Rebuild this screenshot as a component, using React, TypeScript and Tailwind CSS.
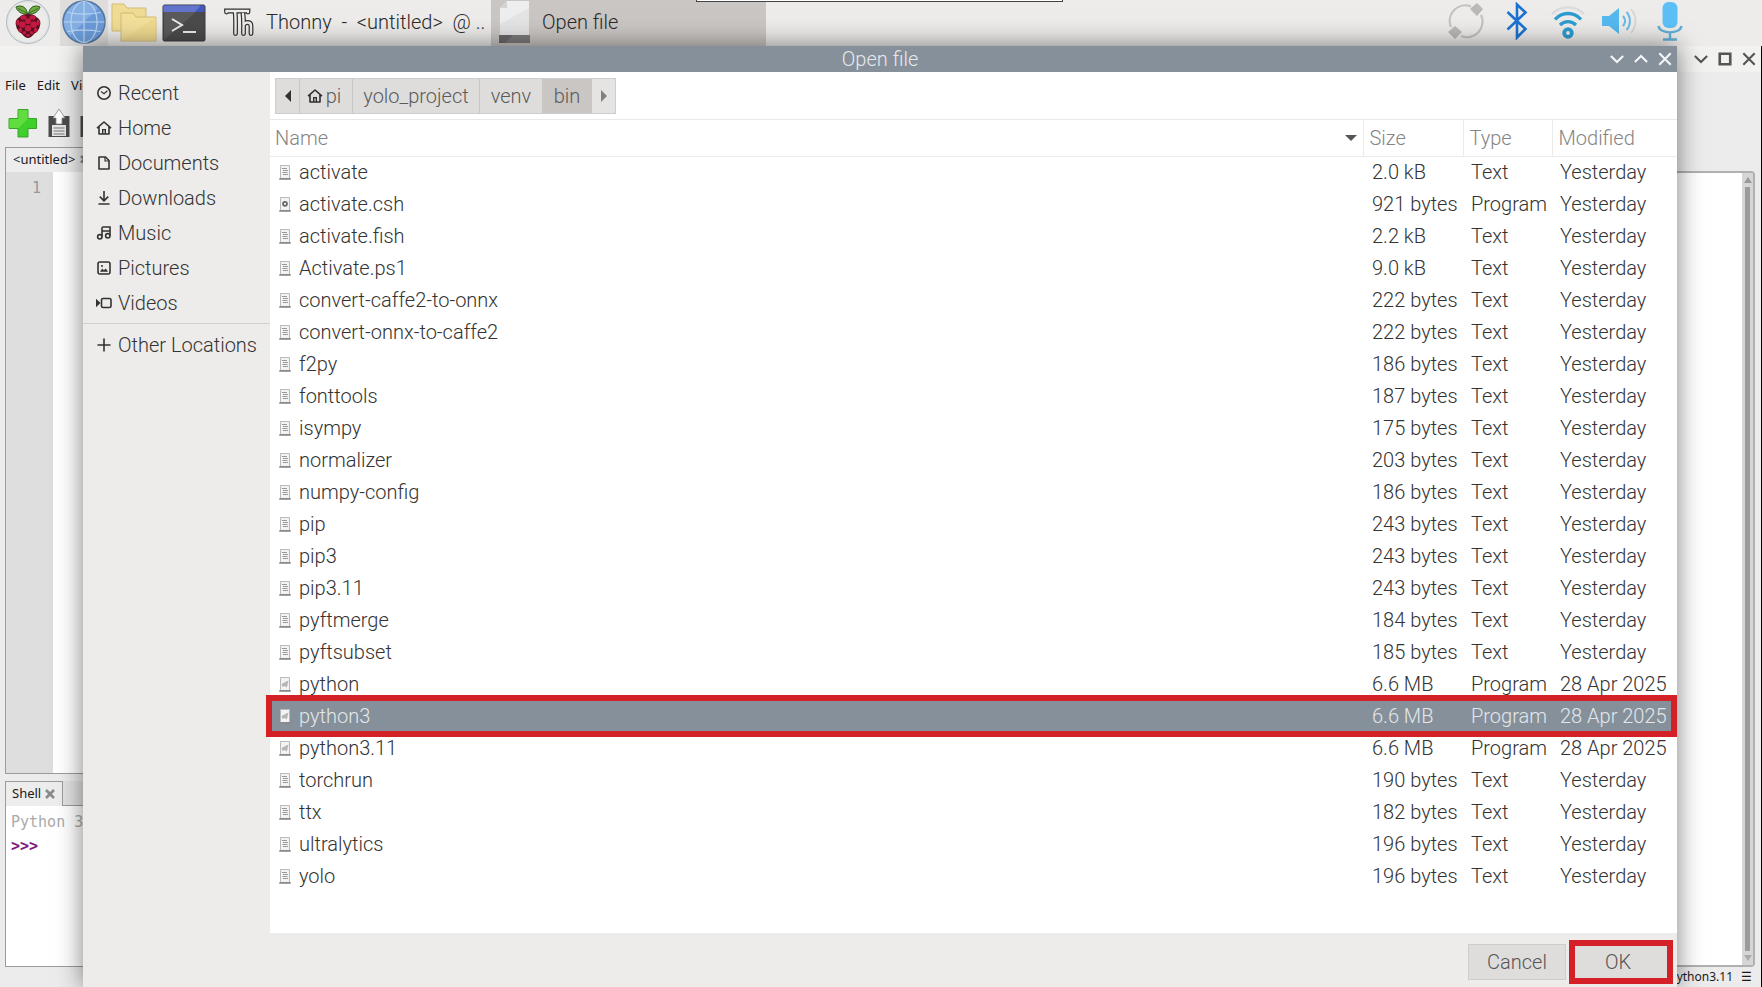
import type { ReactNode } from 'react';

type FileKind = 'Text' | 'Program';

interface FileEntry {
  name: string;
  size: string;
  type: FileKind;
  modified: string;
  icon?: 'text' | 'script' | 'link';
  selected?: boolean;
}

const files: FileEntry[] = [
  { name: 'activate', size: '2.0 kB', type: 'Text', modified: 'Yesterday' },
  { name: 'activate.csh', size: '921 bytes', type: 'Program', modified: 'Yesterday', icon: 'script' },
  { name: 'activate.fish', size: '2.2 kB', type: 'Text', modified: 'Yesterday' },
  { name: 'Activate.ps1', size: '9.0 kB', type: 'Text', modified: 'Yesterday' },
  { name: 'convert-caffe2-to-onnx', size: '222 bytes', type: 'Text', modified: 'Yesterday' },
  { name: 'convert-onnx-to-caffe2', size: '222 bytes', type: 'Text', modified: 'Yesterday' },
  { name: 'f2py', size: '186 bytes', type: 'Text', modified: 'Yesterday' },
  { name: 'fonttools', size: '187 bytes', type: 'Text', modified: 'Yesterday' },
  { name: 'isympy', size: '175 bytes', type: 'Text', modified: 'Yesterday' },
  { name: 'normalizer', size: '203 bytes', type: 'Text', modified: 'Yesterday' },
  { name: 'numpy-config', size: '186 bytes', type: 'Text', modified: 'Yesterday' },
  { name: 'pip', size: '243 bytes', type: 'Text', modified: 'Yesterday' },
  { name: 'pip3', size: '243 bytes', type: 'Text', modified: 'Yesterday' },
  { name: 'pip3.11', size: '243 bytes', type: 'Text', modified: 'Yesterday' },
  { name: 'pyftmerge', size: '184 bytes', type: 'Text', modified: 'Yesterday' },
  { name: 'pyftsubset', size: '185 bytes', type: 'Text', modified: 'Yesterday' },
  { name: 'python', size: '6.6 MB', type: 'Program', modified: '28 Apr 2025', icon: 'link' },
  { name: 'python3', size: '6.6 MB', type: 'Program', modified: '28 Apr 2025', icon: 'link', selected: true },
  { name: 'python3.11', size: '6.6 MB', type: 'Program', modified: '28 Apr 2025', icon: 'link' },
  { name: 'torchrun', size: '190 bytes', type: 'Text', modified: 'Yesterday' },
  { name: 'ttx', size: '182 bytes', type: 'Text', modified: 'Yesterday' },
  { name: 'ultralytics', size: '196 bytes', type: 'Text', modified: 'Yesterday' },
  { name: 'yolo', size: '196 bytes', type: 'Text', modified: 'Yesterday' },
];

/* ---------- icons ---------- */

function Glyph({ children, className = 'size-4' }: { children: ReactNode; className?: string }) {
  return (
    <svg viewBox="0 0 16 16" fill="none" stroke="currentColor" strokeWidth="1.6" className={`${className} shrink-0`} aria-hidden="true">
      {children}
    </svg>
  );
}

const HomeIcon = () => (
  <Glyph>
    <path d="M1 8.2 8 2l7 6.2M3 7v7h10V7" strokeLinejoin="round" />
    <path d="M6.7 14V9.6h2.6V14" strokeWidth="1.4" />
  </Glyph>
);

const places: { label: string; icon: ReactNode }[] = [
  {
    label: 'Recent',
    icon: (
      <Glyph>
        <circle cx="8" cy="8" r="6.2" />
        <path d="m5 6.5 3 2.2 3.4-3" strokeWidth="1.2" />
      </Glyph>
    ),
  },
  { label: 'Home', icon: <HomeIcon /> },
  {
    label: 'Documents',
    icon: (
      <Glyph>
        <path d="M3 2h6.5L13 5.5V14H3z" strokeLinejoin="round" />
        <path d="M9 2v4h4" strokeWidth="1.2" />
      </Glyph>
    ),
  },
  {
    label: 'Downloads',
    icon: (
      <Glyph>
        <path d="M8 1v9.5M3.8 6.6 8 10.8l4.2-4.2M2.5 14h11" />
      </Glyph>
    ),
  },
  {
    label: 'Music',
    icon: (
      <Glyph>
        <path d="M6 11.5V3.2c0-.7.4-1.2 1.2-1.2H14v8.5M6 6h8" />
        <circle cx="3.8" cy="11.8" r="2.2" />
        <circle cx="11.8" cy="10.8" r="2.2" />
      </Glyph>
    ),
  },
  {
    label: 'Pictures',
    icon: (
      <Glyph>
        <rect x="2" y="2" width="12" height="12" rx="2" />
        <path d="M4 11.8 6.2 8.6l1.6 1.6 2-1.8 2.2 3.4z" fill="currentColor" stroke="none" />
        <circle cx="6" cy="6" r="1" fill="currentColor" stroke="none" />
      </Glyph>
    ),
  },
  {
    label: 'Videos',
    icon: (
      <Glyph>
        <rect x="5.5" y="3.5" width="9.5" height="9" rx="1.6" />
        <path d="M0 3.8 4.5 8 0 12.2z" fill="currentColor" stroke="none" />
      </Glyph>
    ),
  },
];

function FileIcon({ kind = 'text' }: { kind?: 'text' | 'script' | 'link' }) {
  return (
    <svg viewBox="0 0 12 15" className="h-[15px] w-3 shrink-0" aria-hidden="true">
      <path d="M1.5.5h9v13h-9z" fill="#f3f3f3" stroke="#b9b9b9" />
      <path d="M.3 13h11.4v1.8H.3z" fill="#8a8a8a" />
      {kind === 'text' && <path d="M3 3.5h5M4 5.5h5M3.5 7.5h5M4 9.5h5" stroke="#909090" strokeWidth=".9" />}
      {kind === 'script' && <circle cx="6" cy="6.8" r="2" fill="none" stroke="#666" strokeWidth="1.7" />}
      {kind === 'link' && <path d="M9.5 3.5 7.8 10.5 5.8 9 3.5 10l-1-3z" fill="#b5b5b5" />}
    </svg>
  );
}

function Raspberry() {
  return (
    <svg viewBox="0 0 46 44" className="h-11 w-[46px]" aria-hidden="true">
      <circle cx="23" cy="22" r="21.5" fill="#e4e4e4" stroke="#aebac2" />
      <circle cx="23" cy="22" r="19.5" fill="#ebebea" />
      <path d="M22.500 14C17 14.500 12 11.500 11 7c5-2.500 10.500-.5 11.500 7zM23.500 14c5.500.5 10.500-2.500 11.500-7-5-2.500-10.500-.5-11.500 7z" fill="#6fae45" stroke="#31551f" />
      <path d="M13 8.500 22 13M33 8.500 24 13" stroke="#31551f" strokeWidth=".8" />
      <path d="M23 14c4 0 7 1 9 3.500 3 1.500 4 5 3 8-.5 4-3 6.500-5.500 8C27.500 36 25 38 23 38s-4.500-2-6.500-4.500c-2.500-1.500-5-4-5.500-8-1-3 0-6.500 3-8C16 15 19 14 23 14z" fill="#54101f" />
      <g fill="#c1193f">
        <ellipse cx="18.500" cy="17.500" rx="3.200" ry="2.300" />
        <ellipse cx="27.500" cy="17.500" rx="3.200" ry="2.300" />
        <circle cx="23" cy="21.200" r="2.900" />
        <circle cx="17.300" cy="24.500" r="3.300" />
        <circle cx="28.700" cy="24.500" r="3.300" />
        <ellipse cx="12.800" cy="22.500" rx="1.600" ry="3" />
        <ellipse cx="33.200" cy="22.500" rx="1.600" ry="3" />
        <circle cx="23" cy="28.200" r="3.200" />
        <ellipse cx="15.300" cy="30" rx="2" ry="2.600" />
        <ellipse cx="30.700" cy="30" rx="2" ry="2.600" />
        <ellipse cx="19.300" cy="32.800" rx="2" ry="1.800" />
        <ellipse cx="26.700" cy="32.800" rx="2" ry="1.800" />
        <ellipse cx="23" cy="35.300" rx="2.200" ry="1.400" />
      </g>
    </svg>
  );
}

function Globe() {
  return (
    <svg viewBox="0 0 44 44" className="size-11" aria-hidden="true">
      <circle cx="22" cy="22" r="21" fill="#6b9bd8" stroke="#54779f" strokeWidth="1.5" />
      <path d="M2 22A20 20 0 0 1 36 8L8 36a20 20 0 0 1-6-14z" fill="#86b0e4" />
      <g fill="none" stroke="#b9d3f2" strokeWidth="1.2">
        <ellipse cx="22" cy="22" rx="13" ry="20.500" />
        <path d="M22 1.500v41M1.500 22h41M5.500 12.500c10 2 23 2 33 0M5.500 31.500c10-2 23-2 33 0" />
      </g>
    </svg>
  );
}

function Folders() {
  return (
    <svg viewBox="0 0 46 40" className="h-10 w-[46px]" aria-hidden="true">
      <g stroke="#d2bd74" strokeWidth="1">
        <path d="M1 2h12l3 4h19v23H1z" fill="#f0dc95" />
        <path d="M10 11h12l3 4h20v24H10z" fill="#f3e09b" />
      </g>
      <path d="M10.500 38.500 44.500 15.500v23z" fill="#efda8e" />
    </svg>
  );
}

function Terminal() {
  return (
    <svg viewBox="0 0 44 38" className="h-[38px] w-11" aria-hidden="true">
      <rect x="1" y="1" width="42" height="36" rx="1.500" fill="#4b4b4b" stroke="#3d3d44" />
      <path d="M2 8h32L2 36z" fill="#5a5a5a" />
      <path d="M1.500 1.500h41V8h-41z" fill="#4459bd" />
      <path d="M1.500 1.500h37L33 8H1.500z" fill="#6274cb" />
      <path d="m10 15 10 6-10 6M21 28h13" fill="none" stroke="#ececec" strokeWidth="2" />
    </svg>
  );
}

function ThonnyLogo() {
  const strokes = 'M2.500 4 2.500 3h21.500v1M11 3c1 8 .5 16 .5 22.500M19 6c.8 6 .5 13 .5 19.500M19.500 17c2-3.500 7.500-3.500 7.500 1v7.500';
  return (
    <svg viewBox="0 0 30 29" className="h-[29px] w-[30px] shrink-0" fill="none" strokeLinecap="round" aria-hidden="true">
      <path d={strokes} stroke="#303030" strokeWidth="4.800" />
      <path d={strokes} stroke="#eeedeb" strokeWidth="2.400" />
    </svg>
  );
}

function BlankPage() {
  return (
    <svg viewBox="0 0 32 44" className="h-11 w-8" aria-hidden="true">
      <path d="M8 1h22v35H1V8z" fill="#eeeeee" />
      <path d="M1 24 30 8v28H1z" fill="#e4e4e5" />
      <path d="M8 1v7H1z" fill="#d5d4d3" />
      <path d="M0 35h31v8H0z" fill="#6a6868" />
      <path d="M14 35h17v8H6z" fill="#7d7b7b" />
    </svg>
  );
}

function TrayIcons() {
  return (
    <div className="flex items-center pr-[67px] pb-1 [&>button]:flex [&>button]:w-[51px] [&>button]:justify-center">
      <button aria-label="Updates">
        <svg viewBox="0 0 36 38" className="h-[38px] w-9" fill="none" aria-hidden="true">
          <path d="M3 25A15.500 15.500 0 0 1 23 4.500M33 13a15.500 15.500 0 0 1-20 21" stroke="#c4c2c0" strokeWidth="2.200" />
          <path d="m29 1 6 6-6 7-7-7zM7 24l7 6-7 7-7-7z" fill="#bbb9b7" />
        </svg>
      </button>
      <button aria-label="Bluetooth">
        <svg viewBox="0 0 22 38" className="h-[38px] w-[22px]" fill="none" stroke="#1a73d2" strokeWidth="2.600" aria-hidden="true">
          <path d="m1.500 10 18 17-8.500 8.500v-33l8.500 8-18 17" />
        </svg>
      </button>
      <button aria-label="Wi-Fi">
        <svg viewBox="0 0 36 38" className="h-[38px] w-9" fill="none" aria-hidden="true">
          <path d="M2 12c9-9 23-9 32 0" stroke="#dcdcdc" strokeWidth="2.500" />
          <path d="M5 17.500c7-8 19-8 26 0M10 23c4.500-4.500 11.500-4.500 16 0" stroke="#2c9cd2" strokeWidth="3.400" />
          <circle cx="18" cy="31" r="3.800" stroke="#2c9cd2" strokeWidth="3.800" />
        </svg>
      </button>
      <button aria-label="Volume">
        <svg viewBox="0 0 36 32" className="h-8 w-9" fill="none" aria-hidden="true">
          <path d="M1 11h7L18 3v26L8 21H1z" fill="#55b9ef" />
          <path d="M22 11c2.500 3 2.500 7 0 10M25.500 7c4.500 5 4.500 13 0 18" stroke="#68b9e6" strokeWidth="2" />
          <path d="M30 4c6 7 6 17 0 24" stroke="#d3d3d3" strokeWidth="1.600" />
        </svg>
      </button>
      <button aria-label="Microphone">
        <svg viewBox="0 0 26 40" className="h-10 w-[26px]" fill="none" aria-hidden="true">
          <rect x="5.500" y="1" width="15" height="26" rx="6" fill="#5cc0f7" />
          <path d="M1.500 25c1 8.500 22 8.500 23 0M13 32v6M6 38.500h14" stroke="#64afd6" strokeWidth="2.400" />
        </svg>
      </button>
    </div>
  );
}

/* ---------- desktop panel ---------- */

function Taskbar() {
  return (
    <header className="flex h-[46px] shrink-0 items-stretch bg-[#edecea] text-[20px] font-light text-[#2a2a2a]">
      <button aria-label="Menu" className="flex w-[60px] items-start justify-start pl-[5px]">
        <Raspberry />
      </button>
      <button aria-label="Web browser" className="flex w-12 items-start justify-center bg-[#dfdddb]">
        <Globe />
      </button>
      <button aria-label="File manager" className="flex w-[52px] items-start justify-center pt-[2px]">
        <Folders />
      </button>
      <button aria-label="Terminal" className="flex w-[52px] items-start pt-[4px] pl-[2px]">
        <Terminal />
      </button>
      <button className="flex w-[279px] items-center gap-3 pb-[2px] pl-[12px] whitespace-pre">
        <ThonnyLogo />
        <span>{'Thonny  -  <untitled>  @ ..'}</span>
      </button>
      <button className="flex w-[275px] items-center gap-[11px] bg-[#cac6c3] pb-[2px] pl-[8px]">
        <BlankPage />
        <span>Open file</span>
      </button>
      <div className="flex-1" />
      <TrayIcons />
    </header>
  );
}

/* ---------- Thonny main window ---------- */

function ThonnyWindow() {
  return (
    <main className="flex min-h-0 flex-1 flex-col border-r border-black bg-[#ececec] font-['Noto_Sans',sans-serif] text-[13px] text-[#1a1a1a]">
      <div className="flex h-[26px] shrink-0 items-center justify-end gap-[10px] bg-[#f2f2f1] pr-[5px] text-[#555]">
        <button aria-label="Minimise">
          <Glyph className="size-[14px]"><path d="m1 4.500 7 7 7-7" strokeWidth="2.400" /></Glyph>
        </button>
        <button aria-label="Maximise">
          <Glyph className="size-[14px]"><path d="M2 2h12v12H2z" strokeWidth="3" /></Glyph>
        </button>
        <button aria-label="Close">
          <Glyph className="size-[14px]"><path d="m1.500 1.500 13 13m0-13-13 13" strokeWidth="2.400" /></Glyph>
        </button>
      </div>
      <nav className="flex h-7 shrink-0 items-center gap-[11px] pl-[5px]">
        <button>File</button>
        <button>Edit</button>
        <button>View</button>
      </nav>
      <div className="flex h-[47px] shrink-0 items-start gap-[10px] pt-2 pl-2">
        <button aria-label="New">
          <svg viewBox="0 0 30 30" className="size-[30px]" aria-hidden="true">
            <path d="M10 1.500h10v9h8.500v10H20V29H10v-8.500H1v-10h9z" fill="#3fd02b" stroke="#38a32a" />
            <path d="M10.500 2h9v9L10.500 20H1.500v-9h9z" fill="#62dd3f" />
          </svg>
        </button>
        <button aria-label="Open">
          <svg viewBox="0 0 22 30" className="h-[30px] w-[22px]" aria-hidden="true">
            <path d="M.5 8h21v21H.5z" fill="#4c4c4c" />
            <path d="M4 17h14v11H4z" fill="#e5e5e5" />
            <path d="M5.500 20h11M5.500 23h11M5.500 26h11" stroke="#777" />
            <path d="m11 1 6 9h-3v6H8v-6H5z" fill="#fff" stroke="#888" strokeWidth=".8" />
          </svg>
        </button>
        <button aria-label="Save">
          <svg viewBox="0 0 22 30" className="h-[30px] w-[22px]" aria-hidden="true">
            <path d="M.5 8h21v21H.5z" fill="#4c4c4c" />
            <path d="M4 17h14v11H4z" fill="#e5e5e5" />
          </svg>
        </button>
      </div>

      <div className="flex min-h-0 flex-1 gap-2 pr-[6px] pl-[5px]">
        <div className="flex w-2/3 flex-col gap-[7px]">
          <section className="flex min-h-0 flex-1 flex-col border border-[#9c9c9c]">
            <div className="flex h-6 shrink-0 items-center gap-1 bg-[#ededed] pl-[7px]">
              <span>&lt;untitled&gt;</span>
              <span className="text-[#888]">✖</span>
            </div>
            <div className="flex flex-1 font-['DejaVu_Sans_Mono',monospace] text-[15px]">
              <div className="w-[47px] bg-[#dedede] pt-[5px] pr-3 text-right text-[#999]">1</div>
              <div className="flex-1 bg-white" />
            </div>
          </section>
          <section className="flex h-[186px] shrink-0 flex-col">
            <div className="flex h-[25px] shrink-0">
              <div className="flex w-[58px] items-center gap-1 border border-b-0 border-[#9c9c9c] bg-[#ededed] pl-[6px]">
                <span>Shell</span>
                <svg viewBox="0 0 10 10" className="size-[10px]" aria-hidden="true">
                  <path d="m1 1 8 8m0-8-8 8" stroke="#8a8a8a" strokeWidth="2.600" />
                </svg>
              </div>
              <div className="flex-1 border-b border-[#9c9c9c] bg-[#e2e2e2]" />
            </div>
            <div className="flex-1 overflow-hidden border border-t-0 border-[#9c9c9c] bg-white pt-1 pl-[5px] font-['DejaVu_Sans_Mono',monospace] text-[15px] leading-6">
              <p className="text-[#aaa]">Python 3.11.2</p>
              <p className="font-bold text-[#7f1b7f]">&gt;&gt;&gt;</p>
            </div>
          </section>
        </div>
        <section className="mt-[24px] flex flex-1 justify-end rounded-sm border-2 border-[#b0b0b0] bg-white">
          <div className="flex w-[11px] flex-col items-center justify-between bg-[#d6d6d6] py-1">
            <svg viewBox="0 0 8 6" className="h-[6px] w-2" aria-hidden="true"><path d="m4 0 4 6H0z" fill="#999" /></svg>
            <div className="my-1 w-[5px] flex-1 bg-[#9b9b9b]" />
            <svg viewBox="0 0 8 6" className="h-[6px] w-2" aria-hidden="true"><path d="M0 0h8L4 6z" fill="#aaa" /></svg>
          </div>
        </section>
      </div>

      <footer className="flex h-5 shrink-0 items-center justify-end gap-2 pr-[9px] text-xs">
        <span>python3.11</span>
        <span>☰</span>
      </footer>
    </main>
  );
}

/* ---------- file chooser ---------- */

function PathBar() {
  return (
    <nav className="flex h-12 shrink-0 items-center border-b border-[#e9e9e9] px-[5px] text-[#5a5a5a]">
      <div className="flex h-9 border border-[#cfcdcb] bg-[#dfdddc]">
        <button aria-label="Back" className="flex w-6 items-center justify-center border-r border-[#cac8c6]">
          <svg viewBox="0 0 6 12" className="h-3 w-[6px]" aria-hidden="true"><path d="M6 0v12L0 6z" fill="#333" /></svg>
        </button>
        <button className="flex w-[53px] items-center justify-center gap-[3px] border-r border-[#cac8c6] pr-1">
          <span className="text-[#2e2e2e]"><HomeIcon /></span>
          pi
        </button>
        <button className="w-[127px] border-r border-[#cac8c6]">yolo_project</button>
        <button className="w-[62px]">venv</button>
        <button className="w-[50px] bg-[#cac6c3]">bin</button>
        <button aria-label="Forward" className="flex w-[23px] items-center justify-center bg-[#e5e4e3]">
          <svg viewBox="0 0 6 12" className="h-3 w-[6px]" aria-hidden="true"><path d="M0 0v12l6-6z" fill="#808080" /></svg>
        </button>
      </div>
    </nav>
  );
}

function FileTable() {
  return (
    <table className="w-full table-fixed text-left whitespace-nowrap">
      <colgroup>
        <col />
        <col className="w-[100px]" />
        <col className="w-[89px]" />
        <col className="w-[125px]" />
      </colgroup>
      <thead className="border-b border-[#ebebeb] text-[#858585]">
        <tr className="h-9 [&>th]:font-light [&>th+th]:border-l [&>th+th]:border-[#ebebeb] [&>th+th]:pl-[6px]">
          <th className="pr-[6px] pl-[5px]">
            <div className="flex items-center justify-between">
              Name
              <svg viewBox="0 0 12 6" className="h-[6px] w-3" aria-hidden="true"><path d="M0 0h12L6 6z" fill="#555" /></svg>
            </div>
          </th>
          <th>Size</th>
          <th>Type</th>
          <th>Modified</th>
        </tr>
      </thead>
      <tbody>
        {files.map((file) => (
          <tr
            key={file.name}
            aria-selected={file.selected}
            className={file.selected ? 'relative h-8 bg-[#86909a] text-[#e3e7ea]' : 'h-8'}
          >
            <td className="pl-[9px]">
              <div className="flex items-center gap-2">
                <FileIcon kind={file.icon} />
                {file.name}
              </div>
              {file.selected && (
                <span className="pointer-events-none absolute -inset-y-[5px] right-0 -left-1 border-[6px] border-[#d42027]" />
              )}
            </td>
            <td className="pl-[9px]">{file.size}</td>
            <td className="pl-2">{file.type}</td>
            <td className="pl-2">{file.modified}</td>
          </tr>
        ))}
      </tbody>
    </table>
  );
}

function OpenFileDialog() {
  return (
    <div
      role="dialog"
      aria-label="Open file"
      className="absolute top-[46px] right-[85px] bottom-0 left-[83px] flex flex-col bg-[#edecea] text-[20px] leading-6 font-light text-[#333] shadow-[0_0_24px_rgba(0,0,0,0.5)]"
    >
      <div className="relative flex h-[26px] shrink-0 items-center justify-center bg-[#86909a] text-[#e6e9ec]">
        <h1 className="text-[20px] font-light">Open file</h1>
        <div className="absolute right-[5px] flex gap-[10px] text-[#f4f6f8]">
          <button aria-label="Shade">
            <Glyph className="size-[14px]"><path d="m1 4.500 7 7 7-7" strokeWidth="2.400" /></Glyph>
          </button>
          <button aria-label="Unshade">
            <Glyph className="size-[14px]"><path d="m1 11.500 7-7 7 7" strokeWidth="2.400" /></Glyph>
          </button>
          <button aria-label="Close dialog">
            <Glyph className="size-[14px]"><path d="m1.500 1.500 13 13m0-13-13 13" strokeWidth="2.400" /></Glyph>
          </button>
        </div>
      </div>

      <div className="flex min-h-0 flex-1">
        <aside className="w-[187px] shrink-0 pt-[3px]">
          <ul>
            {places.map((place) => (
              <li key={place.label}>
                <button className="flex h-[35px] w-full items-center gap-[6px] pl-[13px]">
                  {place.icon}
                  {place.label}
                </button>
              </li>
            ))}
          </ul>
          <hr className="mt-[3px] mb-[3px] border-[#d2d0ce]" />
          <button className="flex h-[35px] w-full items-center gap-[6px] pl-[13px] whitespace-nowrap">
            <Glyph><path d="M8 1.500v13M1.500 8h13" /></Glyph>
            Other Locations
          </button>
        </aside>
        <div className="flex min-w-0 flex-1 flex-col bg-white">
          <PathBar />
          <FileTable />
        </div>
      </div>

      <div className="flex h-[54px] shrink-0 items-center justify-end gap-[3px] pt-[3px] pr-1 text-[#555]">
        <button className="h-9 w-[98px] border border-[#cfcdcb] bg-[#dfdddc]">Cancel</button>
        <button className="h-11 w-[104px] border-[6px] border-[#d42027] bg-[#dfdddc] pr-[6px]">OK</button>
      </div>
    </div>
  );
}

export default function App() {
  return (
    <div className="relative flex h-screen flex-col overflow-hidden font-[Roboto,sans-serif]">
      <Taskbar />
      <ThonnyWindow />
      <OpenFileDialog />
      <div className="absolute top-0 left-[696px] h-[2px] w-[367px] border border-t-0 border-[#444] bg-white" />
    </div>
  );
}
